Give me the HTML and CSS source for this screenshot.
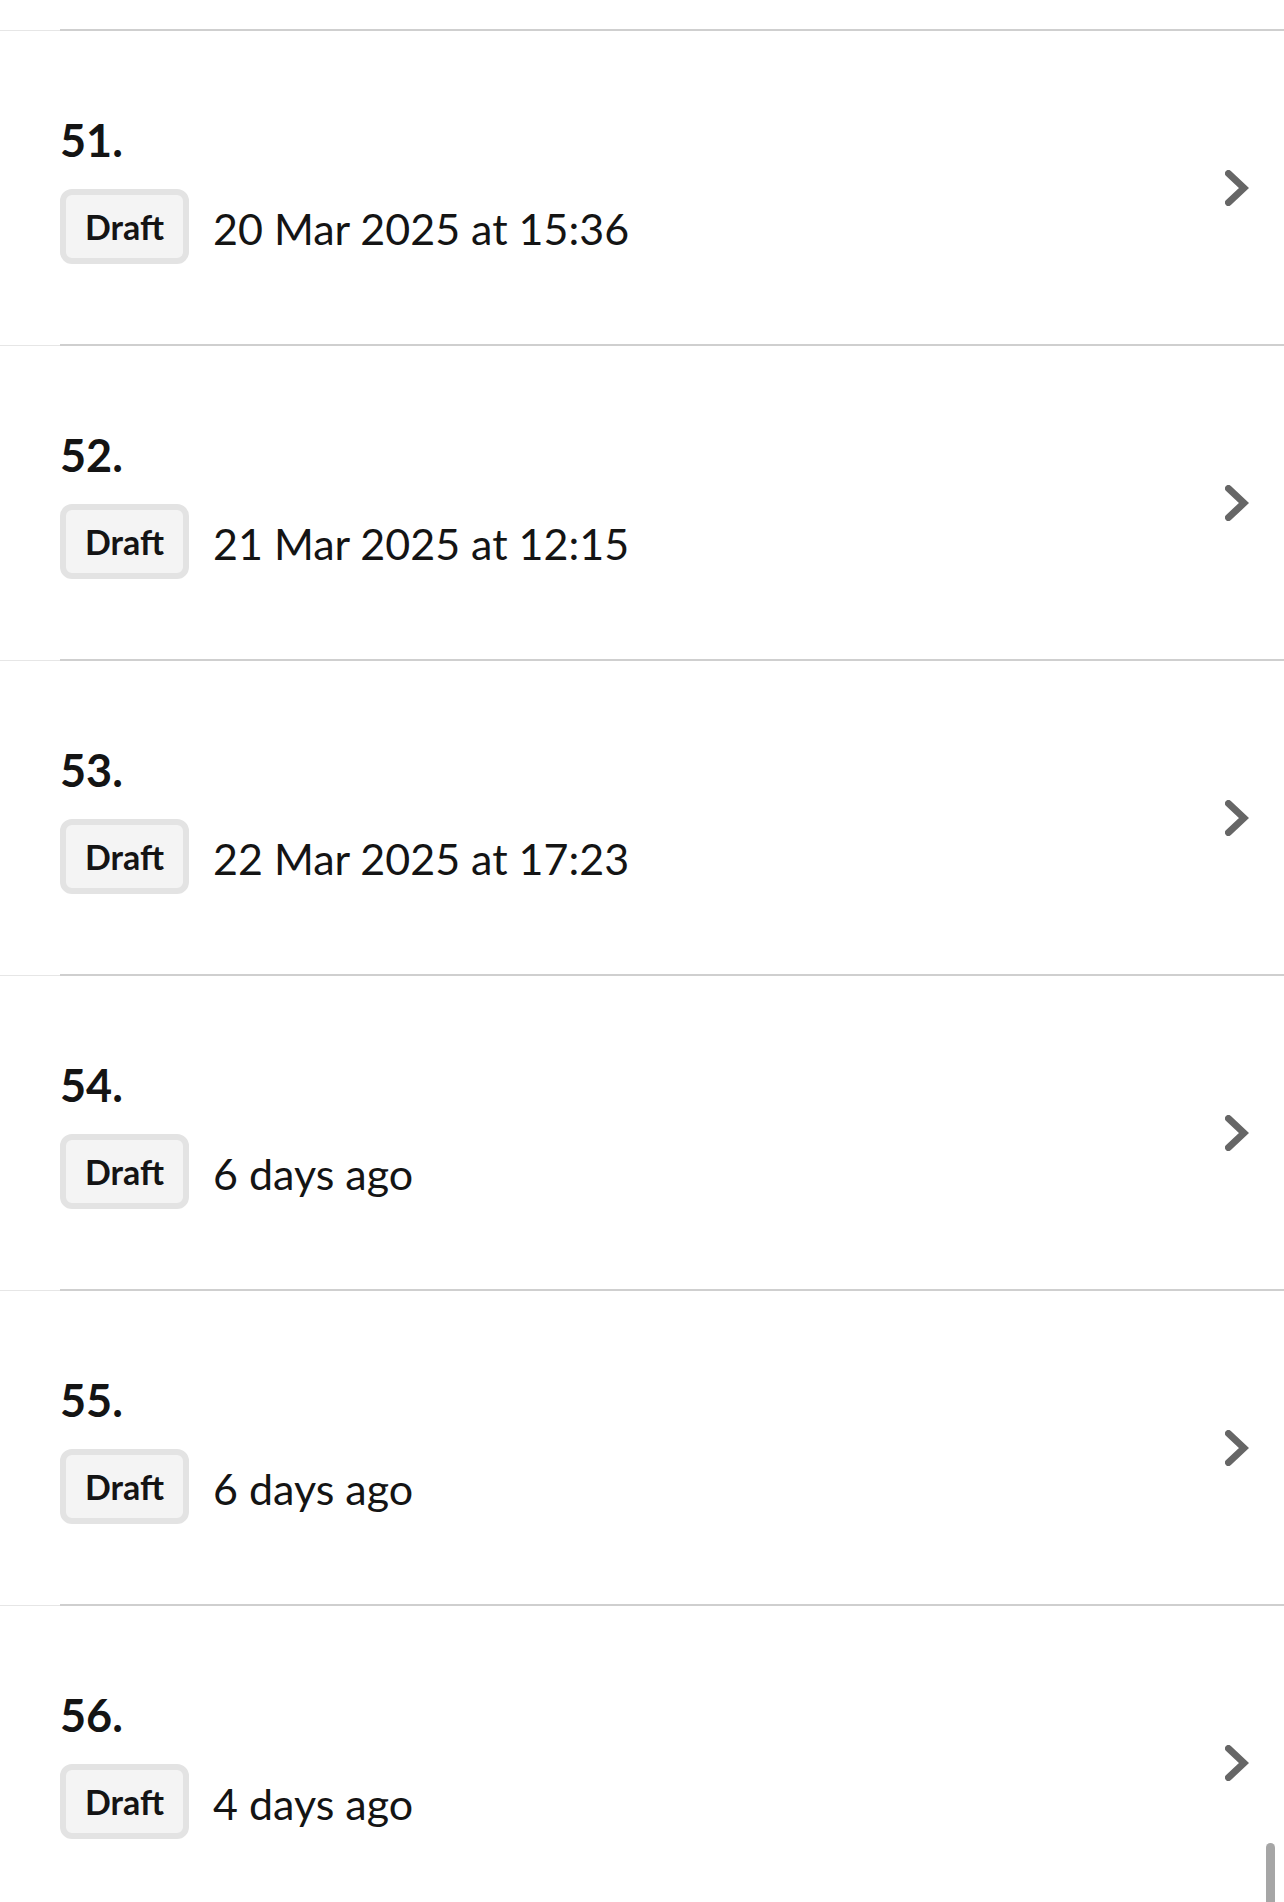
FILE: index.html
```html
<!DOCTYPE html>
<html lang="en">
<head>
<meta charset="utf-8">
<title>Drafts</title>
<link rel="stylesheet" href="styles.css">
</head>
<body>
<ul class="list">
  <li class="item item-tail"><div class="item-inner"></div></li>
  <li class="item">
    <div class="item-inner">
      <div class="item-main">
        <div class="item-num">51.</div>
        <div class="item-meta"><span class="badge">Draft</span><span class="item-date">20 Mar 2025 at 15:36</span></div>
      </div>
      <svg class="chevron" viewBox="0 0 24 36" width="24" height="36"><polyline points="3.5,3.5 19,18 3.5,32.5"/></svg>
    </div>
  </li>
  <li class="item">
    <div class="item-inner">
      <div class="item-main">
        <div class="item-num">52.</div>
        <div class="item-meta"><span class="badge">Draft</span><span class="item-date">21 Mar 2025 at 12:15</span></div>
      </div>
      <svg class="chevron" viewBox="0 0 24 36" width="24" height="36"><polyline points="3.5,3.5 19,18 3.5,32.5"/></svg>
    </div>
  </li>
  <li class="item">
    <div class="item-inner">
      <div class="item-main">
        <div class="item-num">53.</div>
        <div class="item-meta"><span class="badge">Draft</span><span class="item-date">22 Mar 2025 at 17:23</span></div>
      </div>
      <svg class="chevron" viewBox="0 0 24 36" width="24" height="36"><polyline points="3.5,3.5 19,18 3.5,32.5"/></svg>
    </div>
  </li>
  <li class="item">
    <div class="item-inner">
      <div class="item-main">
        <div class="item-num">54.</div>
        <div class="item-meta"><span class="badge">Draft</span><span class="item-date">6 days ago</span></div>
      </div>
      <svg class="chevron" viewBox="0 0 24 36" width="24" height="36"><polyline points="3.5,3.5 19,18 3.5,32.5"/></svg>
    </div>
  </li>
  <li class="item">
    <div class="item-inner">
      <div class="item-main">
        <div class="item-num">55.</div>
        <div class="item-meta"><span class="badge">Draft</span><span class="item-date">6 days ago</span></div>
      </div>
      <svg class="chevron" viewBox="0 0 24 36" width="24" height="36"><polyline points="3.5,3.5 19,18 3.5,32.5"/></svg>
    </div>
  </li>
  <li class="item">
    <div class="item-inner">
      <div class="item-main">
        <div class="item-num">56.</div>
        <div class="item-meta"><span class="badge">Draft</span><span class="item-date">4 days ago</span></div>
      </div>
      <svg class="chevron" viewBox="0 0 24 36" width="24" height="36"><polyline points="3.5,3.5 19,18 3.5,32.5"/></svg>
    </div>
  </li>
</ul>
<div class="scroll-thumb"></div>
</body>
</html>
```
FILE: styles.css
```css
html, body {
  margin: 0;
  padding: 0;
  height: 100%;
  overflow: hidden;
  background: #ffffff;
}
body {
  font-family: Lato, "Liberation Sans", sans-serif;
  color: #141414;
}
.list {
  list-style: none;
  margin: 0;
  padding: 0;
}
.item {
  border-bottom: 1px solid #e6e6e6;
}
.item-inner {
  margin-left: 60px;
  margin-bottom: -1px;
  border-bottom: 2px solid #cfcfcf;
  display: flex;
  align-items: center;
  justify-content: space-between;
  padding-right: 35px;
}
.item-tail .item-inner {
  height: 29px;
}
.item-main {
  display: flex;
  flex-direction: column;
  gap: 27px;
  padding: 87px 0 80px;
}
.item-num {
  font-size: 45px;
  line-height: 44px;
  font-weight: 700;
}
.item-meta {
  display: flex;
  align-items: center;
  gap: 24px;
}
.badge {
  box-sizing: border-box;
  height: 75px;
  display: inline-flex;
  align-items: center;
  padding: 0 19px;
  border: 6px solid #e3e3e3;
  border-radius: 12px;
  background: #f4f4f4;
  font-size: 34px;
  font-weight: 700;
  line-height: 1;
}
.item-date {
  font-size: 43px;
  line-height: 1;
  font-weight: 400;
  padding-top: 4px;
}
.chevron {
  display: block;
  flex: none;
}
.chevron polyline {
  fill: none;
  stroke: #666666;
  stroke-width: 7;
  stroke-linecap: round;
  stroke-linejoin: miter;
}
.scroll-thumb {
  position: fixed;
  left: 1266px;
  top: 1843px;
  width: 9px;
  height: 80px;
  border-radius: 5px;
  background: #a6a6a6;
}
```
